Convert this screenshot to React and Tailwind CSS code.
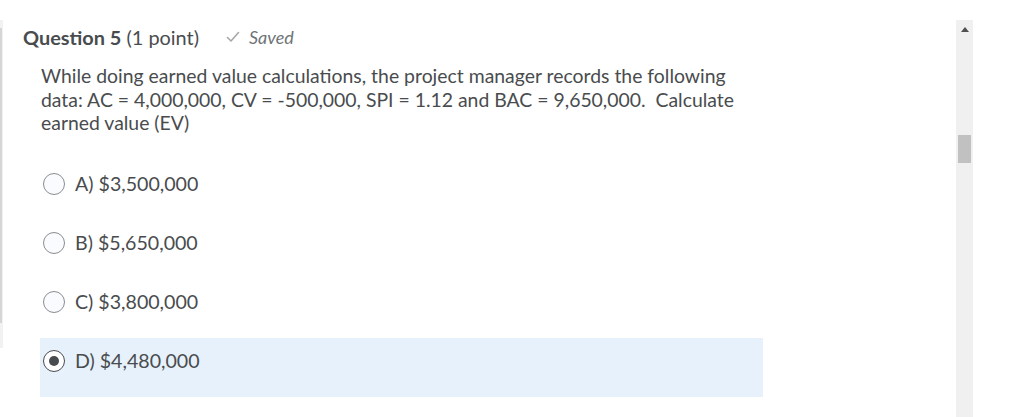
export default function App() {
  const options = [
    { id: 'a', label: 'A) $3,500,000' },
    { id: 'b', label: 'B) $5,650,000' },
    { id: 'c', label: 'C) $3,800,000' },
    { id: 'd', label: 'D) $4,480,000', selected: true },
  ];

  return (
    <div className="flex h-[417px] w-[1028px] overflow-hidden bg-white text-[#494c4e] [font-family:Lato,'Liberation_Sans',sans-serif]">
      <div className="flex w-[956px] pt-[20px]">
        {/* left rail */}
        <div className="h-[328px] w-[3px] bg-[#f2f2f2] pt-[8px]">
          <div className="h-[295px] w-[2px] bg-[#d6d6d6]" />
        </div>

        <div className="flex-1 pl-[20px]">
          <div className="flex items-center pt-[5px] leading-[24px]">
            <h2 className="text-[19.9px]">
              <span className="font-bold">Question 5</span> (1 point)
            </h2>
            <span className="ml-[27px] flex items-center gap-[9px] text-[18px] italic text-[#6e7376]">
              <svg width="14" height="12" viewBox="0 0 14 12" fill="none">
                <path d="M1.5 6.5 L5 10 L12.5 1.5" stroke="#a5a8aa" strokeWidth="1.6" strokeLinecap="round" strokeLinejoin="round" />
              </svg>
              Saved
            </span>
          </div>

          <p className="ml-[18px] mt-[15px] w-[700px] text-[19.4px] leading-[23.5px]">
            While doing earned value calculations, the project manager records the following data: AC = 4,000,000, CV = -500,000, SPI = 1.12 and BAC = 9,650,000.&nbsp; Calculate earned value (EV)
          </p>

          <div className="ml-[17px] mt-[26px] w-[723px]">
            {options.map((o) => (
              <label
                key={o.id}
                className={`flex h-[59px] items-start gap-[10px] pl-[3px] pt-[12px] ${o.selected ? 'bg-[#e7f1fb]' : ''}`}
              >
                <span
                  className={`flex h-[22px] w-[22px] items-center justify-center rounded-full border ${
                    o.selected ? 'border-[#494c4e] bg-white' : 'border-[#8a8d90] bg-[#f9fbff]'
                  }`}
                >
                  {o.selected && <span className="h-[10px] w-[10px] rounded-full bg-[#494c4e]" />}
                </span>
                <span className="text-[19.6px] leading-[22px]">{o.label}</span>
              </label>
            ))}
          </div>
        </div>
      </div>

      {/* scrollbar */}
      <div className="mt-[20px] flex w-[17px] flex-col items-center bg-[#f0f0f0]">
        <svg className="mt-[7px]" width="8" height="5" viewBox="0 0 8 5">
          <path d="M4 0 L8 5 L0 5 Z" fill="#505050" />
        </svg>
        <div className="mt-[103px] h-[28px] w-[13px] bg-[#c1c1c1]" />
      </div>
    </div>
  );
}
